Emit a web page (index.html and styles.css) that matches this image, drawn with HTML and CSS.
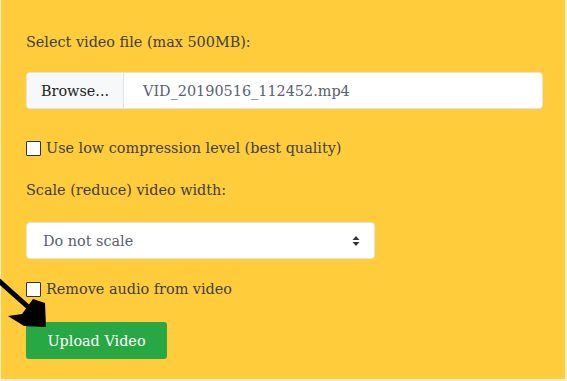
FILE: index.html
```html
<!DOCTYPE html>
<html>
<head>
<meta charset="utf-8">
<link rel="stylesheet" href="styles.css">
</head>
<body>
<div class="panel">
  <form class="form">
    <label class="label first">Select video file (max 500MB):</label>
    <div class="file-group">
      <span class="browse">Browse...</span>
      <span class="filename">VID_20190516_112452.mp4</span>
    </div>
    <label class="check c1"><span class="box"></span>Use low compression level (best quality)</label>
    <label class="label second">Scale (reduce) video width:</label>
    <div class="select">
      <span>Do not scale</span>
      <svg class="caret" width="8" height="12" viewBox="0 0 8 12"><path d="M4 1 L7.5 5 H0.5 Z M4 11 L7.5 7 H0.5 Z" fill="#333"/></svg>
    </div>
    <div class="audio-row">
      <svg class="arrow" width="50" height="55" viewBox="0 278 50 55"><line x1="-2" y1="282" x2="36" y2="316" stroke="#000" stroke-width="5"/><polygon points="8,318 22,316 33,301 45,305 46,329 24,328" fill="#000"/></svg>
      <label class="check c2"><span class="box"></span>Remove audio from video</label>
    </div>
    <div class="btn">Upload Video</div>
  </form>
</div>
</body>
</html>
```
FILE: styles.css
```css
html, body { margin: 0; padding: 0; }
body { background: #fff3c6; font-family: "DejaVu Serif", serif; }
.panel { width: 564px; height: 379px; margin-left: 1px; background: #ffcc3b; box-sizing: border-box; padding: 31px 0 0 25px; }
.form { display: flex; flex-direction: column; align-items: flex-start; color: #404040; font-size: 14.4px; }
.label { display: block; line-height: 22px; }
.file-group { margin-top: 19px; width: 517px; height: 37px; display: flex; background: #fff; border: 1px solid #e2e3e5; border-radius: 4px; box-sizing: border-box; overflow: hidden; }
.browse { width: 96px; background: #f7f8fa; border-right: 1px solid #e2e3e5; display: flex; align-items: center; justify-content: center; color: #222; }
.filename { display: flex; align-items: center; padding-left: 19px; color: #596070; }
.check { display: flex; align-items: center; line-height: 22px; }
.box { width: 13px; height: 13px; border: 1.5px solid #333; background: #fff; margin-right: 5px; border-radius: 1px; }
.c1 { margin-top: 28px; }
.second { margin-top: 20px; }
.select { margin-top: 21px; width: 349px; height: 37px; background: #fff; border: 1px solid #e2e3e5; border-radius: 4px; box-sizing: border-box; display: flex; align-items: center; justify-content: space-between; padding: 0 14px 0 16px; color: #596070; }
.audio-row { position: relative; margin-top: 19px; }
.arrow { position: absolute; left: -26px; top: -2px; }
.c2 { position: relative; }
.btn { margin-top: 22px; width: 141px; height: 37px; background: #28a745; color: #fff; border-radius: 3px; display: flex; align-items: center; justify-content: center; }
```
